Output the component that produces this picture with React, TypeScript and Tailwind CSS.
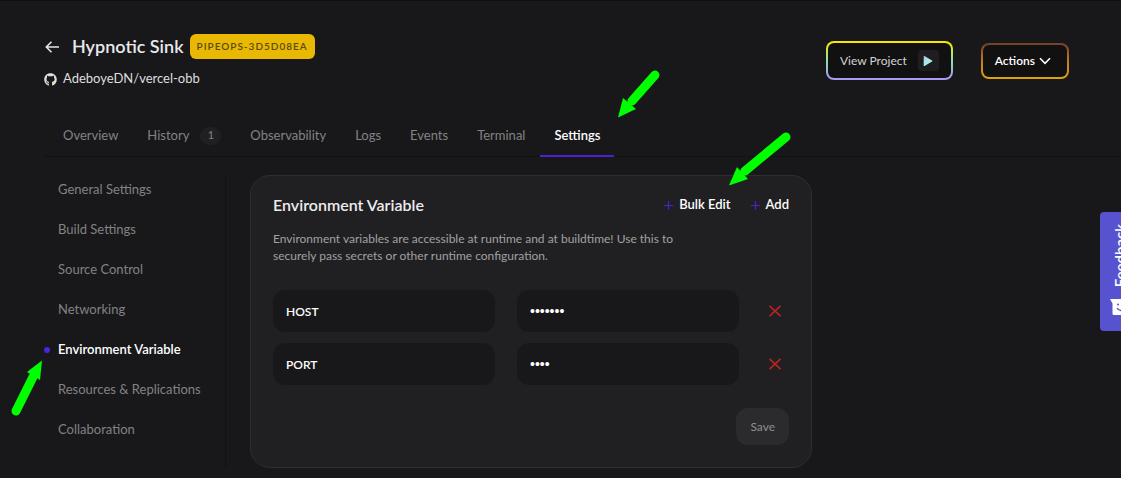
import React from "react";
import { FaGithub } from "react-icons/fa";

const tabs = [
  { label: "Overview" },
  { label: "History", count: 1 },
  { label: "Observability" },
  { label: "Logs" },
  { label: "Events" },
  { label: "Terminal" },
  { label: "Settings", active: true },
];

const sections = [
  "General Settings",
  "Build Settings",
  "Source Control",
  "Networking",
  "Environment Variable",
  "Resources & Replications",
  "Collaboration",
];

const variables = [
  { name: "HOST", value: "0.0.0.0" },
  { name: "PORT", value: "3000" },
];

function Header() {
  return (
    <header className="flex items-start justify-between pr-[52px] pl-11">
      <div className="pt-[34px]">
        <div className="flex h-[25px] items-center">
          <a href="#back" aria-label="Back to projects" className="mr-3">
            <svg className="h-4 w-4" viewBox="0 0 16 16" fill="none" stroke="#e4e4e5" strokeWidth="1.6">
              <path d="M15 8H2.5M7.5 2.8L2.3 8l5.2 5.2" />
            </svg>
          </a>
          <h1 className="mr-1.5 text-[18px] font-semibold whitespace-nowrap text-[#e9e9ea]">Hypnotic Sink</h1>
          <span className="flex h-[25px] items-center rounded-md bg-[#e8b802] px-[7px] text-[10px] font-semibold tracking-widest whitespace-nowrap text-[#594a10]">
            PIPEOPS-3D5D08EA
          </span>
        </div>
        <a href="#repo" className="mt-2.5 flex h-5 items-center gap-1.5 text-[13px] text-[#dededf]">
          <FaGithub size={13} />
          AdeboyeDN/vercel-obb
        </a>
      </div>
      <div className="flex items-center gap-7 pt-[41px]">
        <button className="rounded-lg bg-[linear-gradient(180deg,#f6e705_5%,#8fe0b0_50%,#a79bf2_95%)] p-0.5">
          <span className="flex h-[35px] items-center gap-[11px] rounded-md bg-[#111112] px-3 text-[12px] whitespace-nowrap text-[#d4d4d5]">
            View Project
            <span className="flex h-[21px] w-[21px] items-center justify-center rounded bg-[#1e1e20]">
              <svg className="h-3 w-3" viewBox="0 0 12 12">
                <defs>
                  <linearGradient id="play" x1="0" y1="0" x2="0.5" y2="1">
                    <stop offset="0" stopColor="#c3a0ee" />
                    <stop offset="0.45" stopColor="#a8e4ea" />
                    <stop offset="1" stopColor="#b4f0d0" />
                  </linearGradient>
                </defs>
                <path d="M1.7 1.5Q1.7.6 2.6 1L10 5.4Q10.9 6 10 6.6L2.6 11Q1.7 11.4 1.7 10.5Z" fill="url(#play)" />
              </svg>
            </span>
          </span>
        </button>
        <button className="rounded-lg bg-[linear-gradient(180deg,#70402c,#c87826_50%,#dfa307)] p-0.5">
          <span className="flex h-8 items-center gap-1 rounded-md bg-[#111112] pr-4 pl-3 text-[12px] font-semibold whitespace-nowrap text-white">
            Actions
            <svg className="h-3 w-3" viewBox="0 0 12 12" fill="none" stroke="#fff" strokeWidth="1.6">
              <path d="M1 3.2l5 5.2 5-5.2" />
            </svg>
          </span>
        </button>
      </div>
    </header>
  );
}

function Tabs() {
  return (
    <nav aria-label="Project" className="mt-[25px] ml-11 flex gap-px border-b border-[#111112] pl-[5px]">
      {tabs.map((tab) => (
        <a
          key={tab.label}
          href={"#" + tab.label.toLowerCase()}
          aria-current={tab.active ? "page" : undefined}
          className={
            "-mb-px flex h-[43px] items-center border-b-2 px-3.5 pt-0.5 text-[13px] whitespace-nowrap " +
            (tab.active ? "border-[#4a22d4] font-semibold text-white" : "border-transparent text-[#828284]")
          }
        >
          {tab.label}
          {tab.count && (
            <span className="ml-[11px] flex h-[18px] w-[21px] items-center justify-center rounded-full bg-[#202022] text-[11px]">
              {tab.count}
            </span>
          )}
        </a>
      ))}
    </nav>
  );
}

function Sidebar() {
  return (
    <nav aria-label="Settings" className="w-[182px] shrink-0 border-r border-[#111112] pt-px">
      {sections.map((section) => {
        const active = section === "Environment Variable";
        return (
          <a
            key={section}
            href={"#" + section.split(" ")[0].toLowerCase()}
            aria-current={active ? "page" : undefined}
            className={
              "mb-4 flex h-6 items-center text-[13px] whitespace-nowrap " +
              (active ? "font-semibold text-white" : "text-[#828284]")
            }
          >
            <span className={"mr-2 h-1.5 w-1.5 rounded-full " + (active ? "bg-[#4d23e0]" : "bg-transparent")} />
            {section}
          </a>
        );
      })}
    </nav>
  );
}

function AddButton({ children }: { children: React.ReactNode }) {
  return (
    <button className="flex items-center gap-1.5 text-[13px] font-semibold whitespace-nowrap text-white">
      <svg className="h-[9px] w-[9px]" viewBox="0 0 9 9" stroke="#4a22d4" strokeWidth="1.2">
        <path d="M4.5 0v9M0 4.5h9" />
      </svg>
      {children}
    </button>
  );
}

function Variables() {
  return (
    <section className="-mt-0.5 ml-6 w-full max-w-[562px] rounded-[20px] border border-[#2e2e30] bg-[#202022] px-[22px] pt-[17px] pb-[22px]">
      <div className="flex h-6 items-center justify-between">
        <h2 className="text-[16px] font-semibold text-[#ececed]">Environment Variable</h2>
        <div className="flex gap-5">
          <AddButton>Bulk Edit</AddButton>
          <AddButton>Add</AddButton>
        </div>
      </div>
      <p className="mt-[13px] max-w-[430px] text-[12px] leading-[17px] text-[#a0a0a2]">
        Environment variables are accessible at runtime and at buildtime! Use this to
        <br />
        securely pass secrets or other runtime configuration.
      </p>
      <div className="mt-[26px] flex flex-col gap-[11px]">
        {variables.map((v) => (
          <div key={v.name} className="flex items-center">
            <input
              aria-label={v.name + " name"}
              defaultValue={v.name}
              className="mr-[22px] h-[42px] w-full min-w-0 flex-1 rounded-xl bg-[#18181a] px-[13px] text-[12px] font-semibold text-white"
            />
            <input
              type="password"
              autoComplete="off"
              aria-label={v.name + " value"}
              defaultValue={v.value}
              className="h-[42px] w-full min-w-0 flex-1 rounded-xl bg-[#18181a] px-[13px] font-['Liberation_Sans',sans-serif] text-[14px] text-white"
            />
            <button aria-label={"Remove " + v.name} className="mr-2 ml-[30px]">
              <svg className="h-3 w-3" viewBox="0 0 12 12" stroke="#bd2222" strokeWidth="1.6">
                <path d="M.5.8l11 10.4M11.5.8L.5 11.2" />
              </svg>
            </button>
          </div>
        ))}
      </div>
      <div className="mt-[23px] flex justify-end">
        <button className="h-[37px] rounded-xl bg-[#2b2b2d] px-3.5 text-[12px] text-[#8e8e90]">Save</button>
      </div>
    </section>
  );
}

function Feedback() {
  return (
    <button className="absolute top-[211px] right-0 h-[119px] w-[21px] overflow-hidden rounded-l bg-[#5753d0]">
      <span className="absolute top-3 left-2.5 rotate-180 text-[15px] leading-5 font-semibold text-white [writing-mode:vertical-rl]">
        Feedback
      </span>
      <svg className="absolute top-[87px] left-2.5 h-4 w-4" viewBox="0 0 16 16">
        <path d="M0 0h16v16H4Q2.5 16 2.5 14.5V4.5Z" fill="#fff" />
        <circle cx="8" cy="5.5" r="1" fill="#5753d0" />
        <path d="M7 9q2 3.5 6 2" fill="none" stroke="#5753d0" strokeWidth="1.4" />
      </svg>
    </button>
  );
}

function Pointers() {
  return (
    <svg className="pointer-events-none absolute top-0 left-0" width="1121" height="478" fill="#00ff00" stroke="#00ff00" aria-hidden="true">
      <g strokeWidth="9" strokeLinecap="round">
        <path d="M655 74L632 100" />
        <path d="M786 136L745 170" />
        <path d="M16 410L33 376" />
      </g>
      <g stroke="none">
        <path d="M618 116.500L623 97L636 108z" />
        <path d="M729 184.500L737 166L748 178z" />
        <path d="M42 359.500L27 371L40 379z" />
      </g>
    </svg>
  );
}

export default function App() {
  return (
    <div className="relative min-h-screen overflow-hidden border-t border-[#101011] bg-[#18181a] pb-2.5 font-[Lato,sans-serif]">
      <div className="-mt-px">
        <Header />
        <Tabs />
        <main className="mt-5 ml-11 flex">
          <Sidebar />
          <Variables />
        </main>
      </div>
      <Feedback />
      <Pointers />
    </div>
  );
}
